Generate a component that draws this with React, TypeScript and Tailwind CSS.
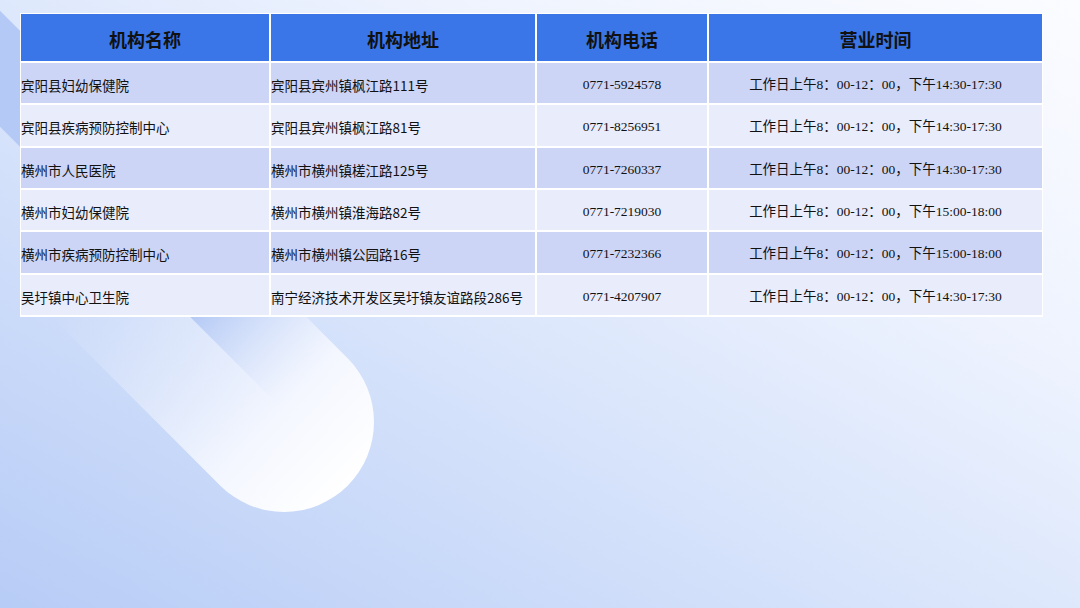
import React from "react";

const rows = [
  ["宾阳县妇幼保健院", "宾阳县宾州镇枫江路111号", "0771-5924578", "工作日上午8：00-12：00，下午14:30-17:30"],
  ["宾阳县疾病预防控制中心", "宾阳县宾州镇枫江路81号", "0771-8256951", "工作日上午8：00-12：00，下午14:30-17:30"],
  ["横州市人民医院", "横州市横州镇槎江路125号", "0771-7260337", "工作日上午8：00-12：00，下午14:30-17:30"],
  ["横州市妇幼保健院", "横州市横州镇淮海路82号", "0771-7219030", "工作日上午8：00-12：00，下午15:00-18:00"],
  ["横州市疾病预防控制中心", "横州市横州镇公园路16号", "0771-7232366", "工作日上午8：00-12：00，下午15:00-18:00"],
  ["吴圩镇中心卫生院", "南宁经济技术开发区吴圩镇友谊路段286号", "0771-4207907", "工作日上午8：00-12：00，下午14:30-17:30"],
];

const headers = ["机构名称", "机构地址", "机构电话", "营业时间"];

export default function App() {
  return (
    <div
      className="relative w-[1080px] h-[608px] overflow-hidden bg-[linear-gradient(to_top_right,#b7ccf6_0%,#d8e4fb_42%,#eef3fe_70%,#fbfcff_100%)]"
      style={{ fontFamily: '"Noto Sans CJK SC", sans-serif' }}
    >
      <svg className="absolute inset-0" width="1080" height="608" viewBox="0 0 1080 608">
        <defs>
          <linearGradient id="cap" gradientUnits="userSpaceOnUse" x1="-90" y1="0" x2="240" y2="0">
            <stop offset="0" stopColor="#ffffff" stopOpacity="1" />
            <stop offset="0.3" stopColor="#f7f9ff" stopOpacity="0.92" />
            <stop offset="1" stopColor="#e6edfc" stopOpacity="0" />
          </linearGradient>
          <linearGradient id="strip" gradientUnits="userSpaceOnUse" x1="15" y1="0" x2="140" y2="0">
            <stop offset="0" stopColor="#dfe8fc" stopOpacity="0" />
            <stop offset="1" stopColor="#b4c9f5" stopOpacity="1" />
          </linearGradient>
        </defs>
        <g transform="translate(284 422) rotate(225)">
          <path d="M 0 -90 L 500 -90 L 500 90 L 0 90 A 90 90 0 0 1 0 -90 Z" fill="url(#cap)" />
          <rect x="0" y="8" width="500" height="82" fill="url(#strip)" />
        </g>
      </svg>

      <div className="absolute left-[20px] top-[13px] bg-white pt-px px-px pb-[2px]">
        <div className="grid grid-cols-[248px_264px_170px_333px] gap-[2px]">
          {headers.map((h) => (
            <div
              key={h}
              className="h-[47px] bg-[#3a76e8] flex items-center justify-center pt-[4px] text-[18px] font-bold text-[#111]"
            >
              {h}
            </div>
          ))}
          {rows.map((r, i) => {
            const bg = i % 2 === 0 ? "bg-[#ccd5f5]" : "bg-[#e8ecfb]";
            return (
              <React.Fragment key={i}>
                <div className={`h-[40.33px] ${bg} flex items-center pt-[4px] text-[13.5px] text-[#111] whitespace-nowrap`}>
                  {r[0]}
                </div>
                <div className={`h-[40.33px] ${bg} flex items-center pt-[4px] text-[13.5px] text-[#111] whitespace-nowrap`}>
                  {r[1]}
                </div>
                <div
                  className={`h-[40.33px] ${bg} flex items-center justify-center pt-[4px] text-[13.5px] text-[#111] whitespace-nowrap`}
                  style={{ fontFamily: '"Liberation Serif", "Noto Sans CJK SC", serif' }}
                >
                  {r[2]}
                </div>
                <div
                  className={`h-[40.33px] ${bg} flex items-center justify-center pt-[4px] text-[13.5px] text-[#111] whitespace-nowrap`}
                  style={{ fontFamily: '"Liberation Serif", "Noto Sans CJK SC", serif' }}
                >
                  {r[3]}
                </div>
              </React.Fragment>
            );
          })}
        </div>
      </div>
    </div>
  );
}
